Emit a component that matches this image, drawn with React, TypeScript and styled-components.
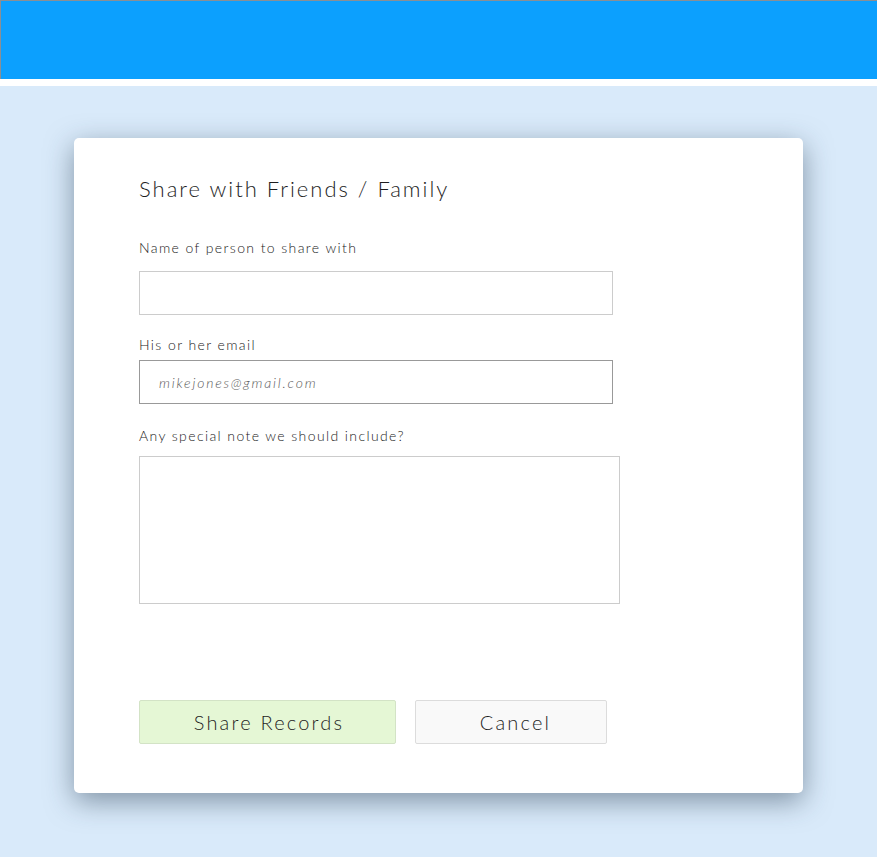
import React from "react";
import styled, { createGlobalStyle } from "styled-components";

const Global = createGlobalStyle`
  html, body { margin: 0; padding: 0; background: #ffffff; }
  body { font-family: "Lato", "Open Sans", sans-serif; }
  * { box-sizing: border-box; }
`;

const Page = styled.div`
  display: flex;
  flex-direction: column;
  min-height: 857px;
  background: #ffffff;
`;

const TopBar = styled.header`
  height: 79px;
  background: #0ca0fe;
  border-top: 1px solid #8a8f94;
  border-left: 1px solid #8a8f94;
`;

const Stage = styled.main`
  flex: 1;
  margin-top: 7px;
  background: #d9eafa;
  padding: 52px 74px 64px 74px;
`;

const Card = styled.section`
  width: 729px;
  background: #ffffff;
  border-radius: 5px;
  box-shadow: 0 8px 28px rgba(40, 60, 80, 0.5);
  padding: 36px 65px 49px 65px;
  display: flex;
  flex-direction: column;
`;

const Title = styled.h1`
  margin: 0 0 34px 0;
  font-weight: 300;
  font-size: 22px;
  line-height: 30px;
  letter-spacing: 2px;
  color: #1e1e1e;
`;

const Label = styled.label<{ $gap: number; $top: number }>`
  display: block;
  margin-top: ${(p) => p.$top}px;
  margin-bottom: ${(p) => p.$gap}px;
  font-size: 14px;
  line-height: 20px;
  font-weight: 300;
  letter-spacing: 1.4px;
  color: #1a1a1a;
`;

const TextInput = styled.input<{ $dark?: boolean }>`
  display: block;
  width: 474px;
  height: 44px;
  margin: 0;
  border: 1px solid ${(p) => (p.$dark ? "#999999" : "#cccccc")};
  border-radius: 0;
  padding: 0 19px;
  font-family: "Lato", "Open Sans", sans-serif;
  font-size: 14px;
  letter-spacing: 1.8px;
  color: #333;
  background: #fff;
  outline: none;
  &::placeholder {
    font-style: italic;
    font-weight: 300;
    color: #5a5a5a;
  }
`;

const NoteArea = styled.textarea`
  display: block;
  width: 481px;
  height: 148px;
  margin: 0;
  border: 1px solid #cccccc;
  resize: none;
  outline: none;
  font-family: "Lato", "Open Sans", sans-serif;
  font-size: 14px;
  padding: 10px;
`;

const Actions = styled.div`
  display: flex;
  gap: 19px;
  margin-top: 96px;
`;

const Button = styled.button<{ $primary?: boolean }>`
  height: 44px;
  width: ${(p) => (p.$primary ? "257px" : "192px")};
  border-radius: 2px;
  border: 1px solid ${(p) => (p.$primary ? "#d3e3c6" : "#dcdcdc")};
  background: ${(p) => (p.$primary ? "#e5f7d5" : "#f9f9f9")};
  font-family: "Lato", "Open Sans", sans-serif;
  font-weight: 300;
  font-size: 20px;
  letter-spacing: 2.2px;
  color: #1e1e1e;
  cursor: pointer;
  padding: 0 0 0 ${(p) => (p.$primary ? "3px" : "9px")};
`;

export default function App() {
  return (
    <>
      <Global />
      <Page>
        <TopBar />
        <Stage>
          <Card>
            <Title>Share with Friends / Family</Title>
            <Label $top={0} $gap={13}>Name of person to share with</Label>
            <TextInput type="text" />
            <Label $top={20} $gap={5}>His or her email</Label>
            <TextInput type="email" $dark placeholder="mikejones@gmail.com" />
            <Label $top={22} $gap={10}>Any special note we should include?</Label>
            <NoteArea />
            <Actions>
              <Button $primary>Share Records</Button>
              <Button>Cancel</Button>
            </Actions>
          </Card>
        </Stage>
      </Page>
    </>
  );
}
